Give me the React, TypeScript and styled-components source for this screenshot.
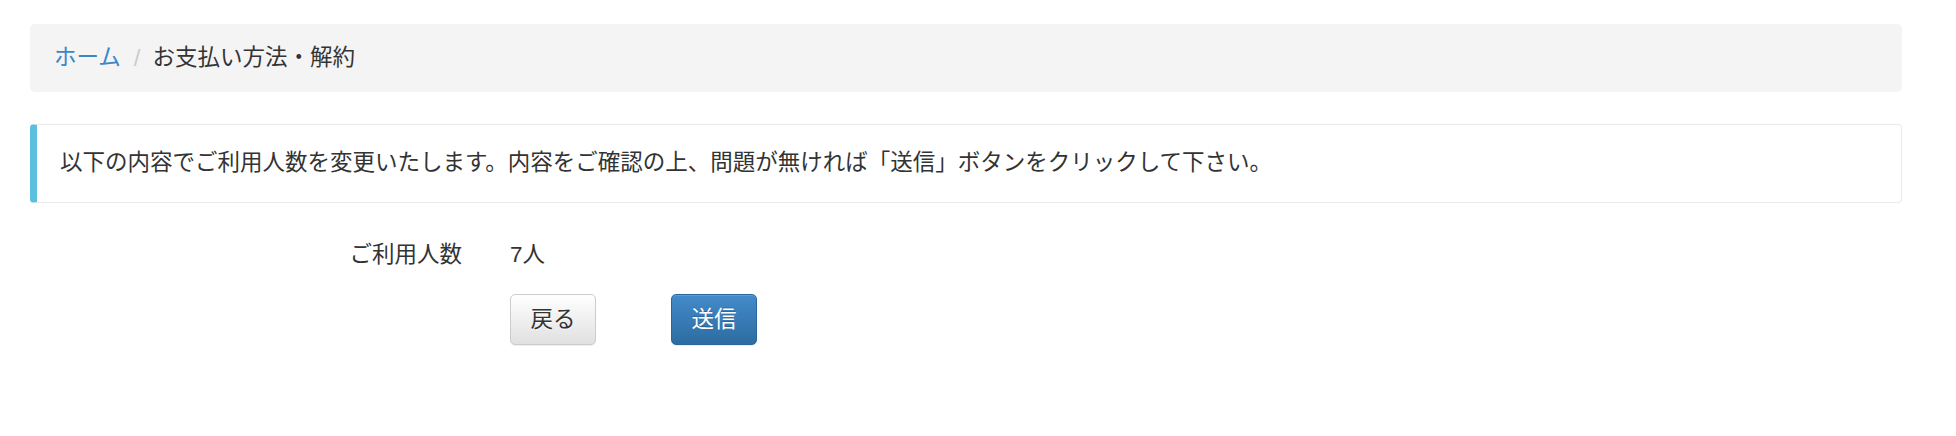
import React from "react";
import styled, { createGlobalStyle } from "styled-components";

const GlobalStyle = createGlobalStyle`
  html, body {
    margin: 0;
    padding: 0;
    background: #ffffff;
  }
  body {
    font-family: "Liberation Sans", "Noto Sans CJK JP", sans-serif;
    font-size: 22.5px;
    line-height: 32px;
    color: #333333;
  }
  * { box-sizing: border-box; }
`;

const Page = styled.div`
  padding: 24px 54px 40px 30px;
`;

const Breadcrumb = styled.ol`
  list-style: none;
  margin: 0 0 32px 0;
  padding: 18px 24px;
  background: #f4f4f4;
  border-radius: 5px;
  display: flex;
  align-items: center;
`;

const Crumb = styled.li<{ $active?: boolean }>`
  color: ${(p) => (p.$active ? "#333333" : "#3a87c8")};
`;

const Separator = styled.li`
  color: #cccccc;
  font-size: 24px;
  margin: 0 12px 0 13px;
`;

const CrumbLink = styled.a`
  color: #3a87c8;
  text-decoration: none;
`;

const Callout = styled.div`
  border: 1px solid #eaeaea;
  border-left: 7px solid #5bc0de;
  border-radius: 4px;
  padding: 22px 20px 23px 23px;
  margin-bottom: 36px;
`;

const Form = styled.div`
  display: grid;
  grid-template-columns: 432px auto;
  column-gap: 48px;
  row-gap: 23px;
  align-items: center;
`;

const Label = styled.div`
  text-align: right;
`;

const Value = styled.div``;

const Actions = styled.div`
  grid-column: 2;
  display: flex;
  gap: 75px;
`;

const Button = styled.button<{ $primary?: boolean }>`
  font-family: "Liberation Sans", "Noto Sans CJK JP", sans-serif;
  font-size: 22.5px;
  line-height: 32px;
  padding: 8.5px 19px;
  width: 86px;
  border-radius: 5px;
  cursor: pointer;
  border: 1px solid ${(p) => (p.$primary ? "#2b669a" : "#cccccc")};
  color: ${(p) => (p.$primary ? "#ffffff" : "#333333")};
  background: ${(p) =>
    p.$primary
      ? "linear-gradient(to bottom, #428bca 0%, #2d6ca2 100%)"
      : "linear-gradient(to bottom, #ffffff 0%, #e0e0e0 100%)"};
  box-shadow: inset 0 1px 0 rgba(255, 255, 255, 0.15), 0 1px 1px rgba(0, 0, 0, 0.075);
  text-shadow: ${(p) => (p.$primary ? "0 -1px 0 rgba(0,0,0,0.2)" : "0 1px 0 #fff")};
  white-space: nowrap;
`;

export default function App() {
  return (
    <>
      <GlobalStyle />
      <Page>
        <Breadcrumb>
          <Crumb>
            <CrumbLink href="#">ホーム</CrumbLink>
          </Crumb>
          <Separator aria-hidden="true">/</Separator>
          <Crumb $active>お支払い方法・解約</Crumb>
        </Breadcrumb>
        <Callout>
          以下の内容でご利用人数を変更いたします。内容をご確認の上、問題が無ければ「送信」ボタンをクリックして下さい。
        </Callout>
        <Form>
          <Label>ご利用人数</Label>
          <Value>7人</Value>
          <Actions>
            <Button type="button">戻る</Button>
            <Button type="button" $primary>
              送信
            </Button>
          </Actions>
        </Form>
      </Page>
    </>
  );
}
